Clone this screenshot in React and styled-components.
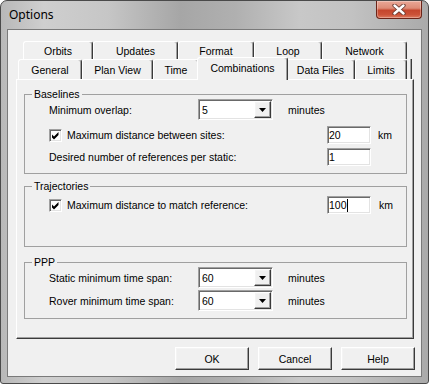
import React from "react";
import styled, { createGlobalStyle, css } from "styled-components";

const GlobalStyle = createGlobalStyle`
  html, body {
    margin: 0;
    padding: 0;
    background: #ffffff;
  }
  body {
    font-family: "Liberation Sans", Arial, sans-serif;
    color: #000;
  }
`;

const DARK = "#3a3a3a";

const sunken = css`
  box-sizing: border-box;
  border: 1px solid;
  border-color: #a0a0a0 #ffffff #ffffff #a0a0a0;
  box-shadow: inset 1px 1px 0 #696969, inset -1px -1px 0 #e3e3e3;
  background: #ffffff;
`;

const raised = css`
  box-sizing: border-box;
  border: 1px solid;
  border-color: #ffffff ${DARK} ${DARK} #ffffff;
  box-shadow: inset -1px -1px 0 #a0a0a0, inset 1px 1px 0 #f4f4f4;
  background: #f0f0f0;
`;

const Window = styled.div`
  box-sizing: border-box;
  width: 429px;
  height: 384px;
  border: 1px solid #4a4a4a;
  border-radius: 7px 7px 3px 3px;
  background: linear-gradient(
    90deg,
    #b8b8b8 0%,
    #cfcfcf 10%,
    #c6c6c6 25%,
    #a6a6a6 42%,
    #b0b0b0 55%,
    #c8c8c8 70%,
    #c2c2c2 82%,
    #aaaaaa 100%
  );
  display: flex;
  flex-direction: column;
  overflow: hidden;
`;

const TitleBar = styled.div`
  height: 28px;
  display: flex;
  align-items: flex-start;
  padding: 0 6px 0 8px;
`;

const Title = styled.span`
  font-family: "Noto Sans", "Open Sans", sans-serif;
  font-size: 12px;
  line-height: 28px;
`;

const CloseButton = styled.div`
  margin-left: auto;
  box-sizing: border-box;
  width: 46px;
  height: 18px;
  border: 1px solid #6b2418;
  border-top: none;
  border-radius: 0 0 4px 4px;
  background: linear-gradient(
    180deg,
    #eaa897 0%,
    #de8c77 42%,
    #c5462d 55%,
    #cc5238 80%,
    #dd7a5f 100%
  );
  box-shadow: inset 0 0 0 1px rgba(255, 255, 255, 0.3);
  display: flex;
  align-items: center;
  justify-content: center;
`;

const Frame = styled.div`
  flex: 1;
  display: flex;
  padding: 0 6px 6px 6px;
`;

const Client = styled.div`
  flex: 1;
  border: 1px solid #7a7a7a;
  background: #f0f0f0;
  display: flex;
  flex-direction: column;
  padding: 11px 0 6px 0;
  font-size: 10.5px;
`;

const TabControl = styled.div`
  margin: 0 7px 0 8px;
  display: flex;
  flex-direction: column;
`;

const TabRow = styled.div`
  display: flex;
  align-items: flex-end;
  height: ${(p) => p.$h}px;
  padding-left: ${(p) => p.$indent}px;
`;

const Tab = styled.div`
  box-sizing: border-box;
  width: ${(p) => p.$w}px;
  height: 100%;
  flex-shrink: 0;
  border-top: 1px solid #ffffff;
  border-left: 1px solid #ffffff;
  border-right: 1px solid ${DARK};
  border-radius: 3px 3px 0 0;
  box-shadow: inset -1px 0 0 #a0a0a0;
  background: #f0f0f0;
  display: flex;
  align-items: center;
  justify-content: center;
  padding-top: 1px;
  white-space: nowrap;

  ${(p) =>
    p.$active &&
    css`
      position: relative;
      z-index: 1;
      width: ${p.$w + 4}px;
      height: ${p.$h + 3}px;
      margin: 0 -2px -1px -2px;
      padding-top: 0;
      padding-bottom: 2px;
    `}
`;

const TabEdge = styled.div`
  box-sizing: border-box;
  width: 5px;
  height: 100%;
  border-right: 1px solid ${DARK};
  box-shadow: inset -1px 0 0 #a0a0a0;
`;

const Panel = styled.div`
  box-sizing: border-box;
  height: 260px;
  border-top: 1px solid #ffffff;
  border-left: 1px solid #ffffff;
  border-right: 1px solid ${DARK};
  border-bottom: 1px solid ${DARK};
  box-shadow: inset -1px -1px 0 #a0a0a0;
  padding: 9px 6px 0 7px;
  display: flex;
  flex-direction: column;
`;

const Group = styled.fieldset`
  margin: ${(p) => p.$top || 0}px 0 0 0;
  padding: 0 0 ${(p) => p.$bottom}px 0;
  border: 1px solid #a0a0a0;
  min-width: 0;
`;

const Legend = styled.legend`
  margin-left: 7px;
  padding: 0 2px;
  font-size: 10.5px;
  line-height: 10px;
`;

const Row = styled.div`
  display: flex;
  align-items: center;
  height: ${(p) => p.$h}px;
  margin-top: ${(p) => p.$mt || 0}px;
  padding-left: 24px;
`;

const Label = styled.div`
  width: ${(p) => p.$w}px;
  flex-shrink: 0;
  display: flex;
  align-items: center;
  gap: 5px;
  white-space: nowrap;
`;

const Unit = styled.span`
  margin-left: ${(p) => p.$gap}px;
`;

const Checkbox = styled.span`
  ${sunken}
  width: 13px;
  height: 13px;
  flex-shrink: 0;
  display: block;

  svg {
    display: block;
    margin: -1px;
  }
`;

const Combo = styled.div`
  ${sunken}
  width: 75px;
  height: 21px;
  padding: 1px;
  display: flex;
`;

const ComboValue = styled.span`
  flex: 1;
  display: flex;
  align-items: center;
  padding-left: 2px;
`;

const ArrowButton = styled.span`
  ${raised}
  width: 17px;
  display: flex;
  align-items: center;
  justify-content: center;
`;

const Edit = styled.div`
  ${sunken}
  width: 44px;
  height: 18px;
  padding-left: 1px;
  display: flex;
  align-items: center;
`;

const Caret = styled.span`
  width: 1px;
  height: 13px;
  background: #000;
`;

const ButtonBar = styled.div`
  display: flex;
  justify-content: flex-end;
  gap: 9px;
  margin-top: 8px;
  padding-right: 6px;
`;

const PushButton = styled.button`
  ${raised}
  width: 74px;
  height: 23px;
  padding: 0;
  font-family: inherit;
  font-size: 10.5px;
  color: #000;
`;

const CloseGlyph = () => (
  <svg width="14" height="11" viewBox="0 0 14 11">
    <path
      d="M2.5 1.5 L11.5 9.5 M11.5 1.5 L2.5 9.5"
      stroke="#6a3a30"
      strokeWidth="4.2"
      strokeLinecap="round"
    />
    <path
      d="M2.5 1.5 L11.5 9.5 M11.5 1.5 L2.5 9.5"
      stroke="#ffffff"
      strokeWidth="2.4"
      strokeLinecap="round"
    />
  </svg>
);

const Check = () => (
  <Checkbox>
    <svg width="13" height="13" viewBox="0 0 13 13">
      <path d="M3 5.5 L5 7.5 L9.5 3 L9.5 6 L5 10.5 L3 8.5 Z" fill="#000" />
    </svg>
  </Checkbox>
);

const Dropdown = ({ value }) => (
  <Combo>
    <ComboValue>{value}</ComboValue>
    <ArrowButton>
      <svg width="7" height="4" viewBox="0 0 7 4">
        <path d="M0 0 H7 L3.5 4 Z" fill="#000" />
      </svg>
    </ArrowButton>
  </Combo>
);

const topTabs = [
  ["Orbits", 70],
  ["Updates", 85],
  ["Format", 76],
  ["Loop", 68],
  ["Network", 85],
];

const bottomTabs = [
  ["General", 64],
  ["Plan View", 71],
  ["Time", 46],
  ["Combinations", 87],
  ["Data Files", 69],
  ["Limits", 52],
];

export default function App() {
  const active = "Combinations";

  return (
    <>
      <GlobalStyle />
      <Window>
        <TitleBar>
          <Title>Options</Title>
          <CloseButton>
            <CloseGlyph />
          </CloseButton>
        </TitleBar>
        <Frame>
          <Client>
            <TabControl>
              <TabRow $h={18} $indent={7}>
                {topTabs.map(([name, w]) => (
                  <Tab key={name} $w={w} $h={18}>
                    {name}
                  </Tab>
                ))}
              </TabRow>
              <TabRow $h={20} $indent={2}>
                {bottomTabs.map(([name, w]) => (
                  <Tab key={name} $w={w} $h={20} $active={name === active}>
                    {name}
                  </Tab>
                ))}
                <TabEdge />
              </TabRow>
              <Panel>
                <Group $bottom={5}>
                  <Legend>Baselines</Legend>
                  <Row $h={21}>
                    <Label $w={149}>Minimum overlap:</Label>
                    <Dropdown value="5" />
                    <Unit $gap={15}>minutes</Unit>
                  </Row>
                  <Row $h={22} $mt={4}>
                    <Label $w={278}>
                      <Check />
                      Maximum distance between sites:
                    </Label>
                    <Edit>20</Edit>
                    <Unit $gap={7}>km</Unit>
                  </Row>
                  <Row $h={22}>
                    <Label $w={278}>Desired number of references per static:</Label>
                    <Edit>1</Edit>
                  </Row>
                </Group>

                <Group $top={7} $bottom={30}>
                  <Legend>Trajectories</Legend>
                  <Row $h={22} $mt={3}>
                    <Label $w={278}>
                      <Check />
                      Maximum distance to match reference:
                    </Label>
                    <Edit>
                      100
                      <Caret />
                    </Edit>
                    <Unit $gap={8}>km</Unit>
                  </Row>
                </Group>

                <Group $top={10} $bottom={7}>
                  <Legend>PPP</Legend>
                  <Row $h={21}>
                    <Label $w={149}>Static minimum time span:</Label>
                    <Dropdown value="60" />
                    <Unit $gap={15}>minutes</Unit>
                  </Row>
                  <Row $h={21} $mt={2}>
                    <Label $w={149}>Rover minimum time span:</Label>
                    <Dropdown value="60" />
                    <Unit $gap={15}>minutes</Unit>
                  </Row>
                </Group>
              </Panel>
            </TabControl>
            <ButtonBar>
              <PushButton>OK</PushButton>
              <PushButton>Cancel</PushButton>
              <PushButton>Help</PushButton>
            </ButtonBar>
          </Client>
        </Frame>
      </Window>
    </>
  );
}
